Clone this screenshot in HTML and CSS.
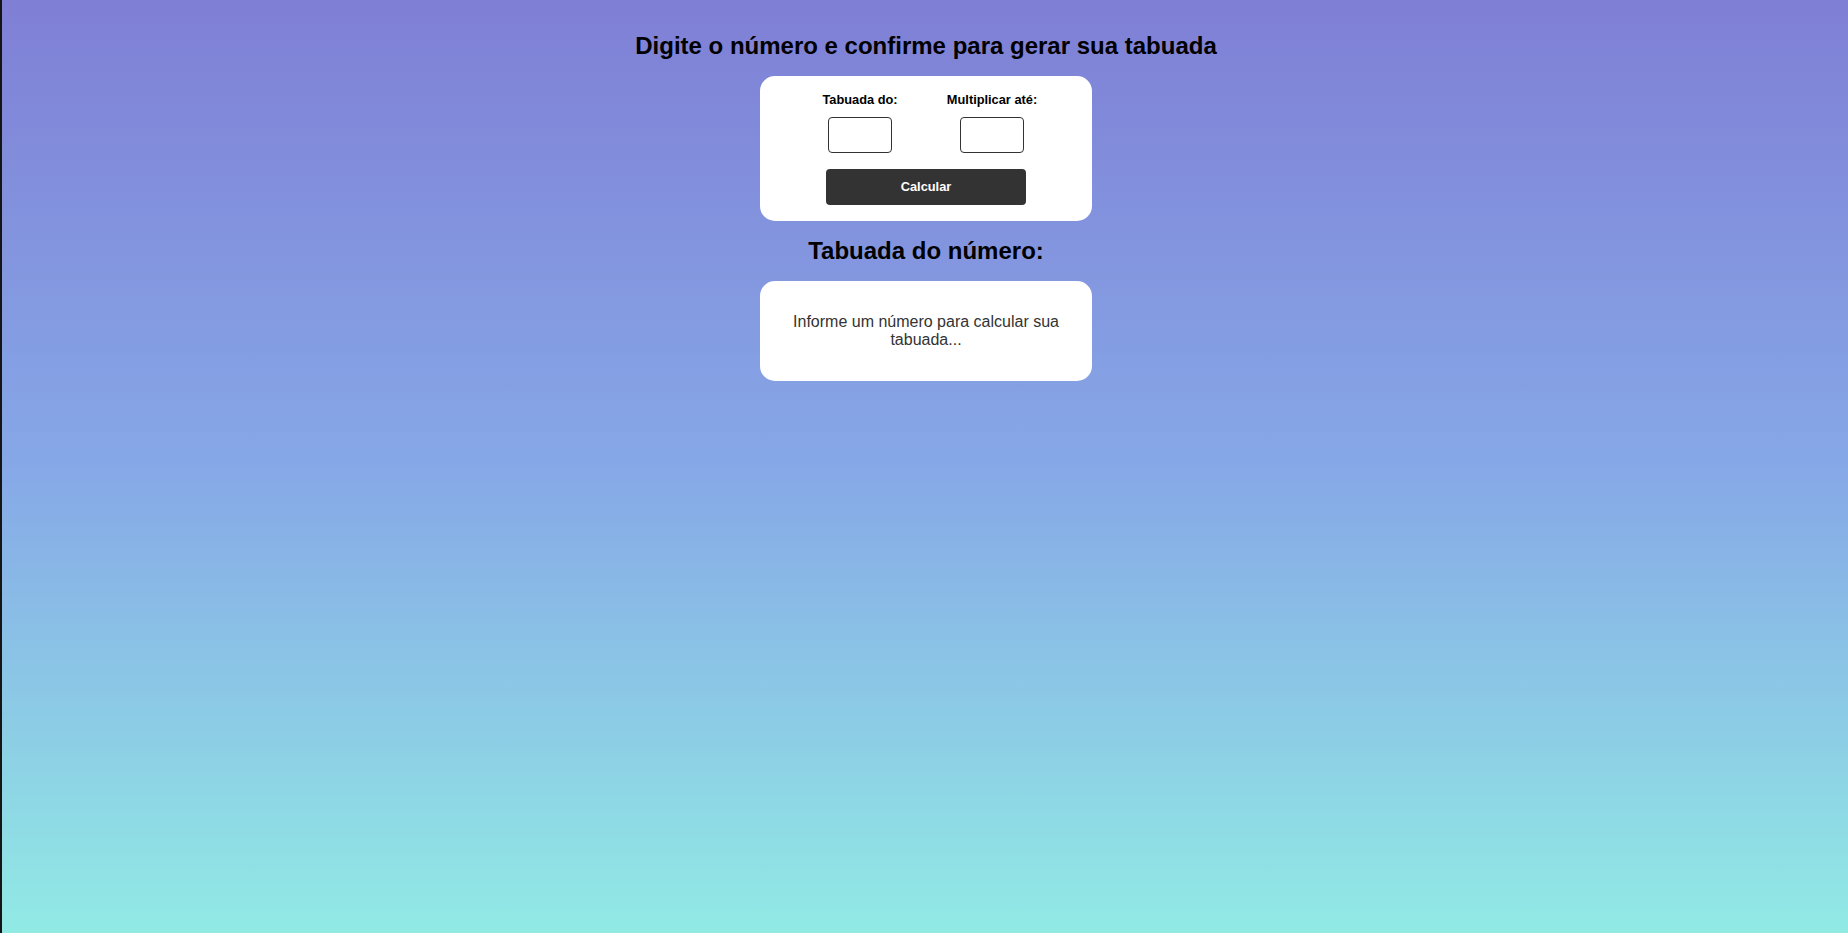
FILE: index.html
```html
<!DOCTYPE html>
<html lang="pt-BR">
<head>
<meta charset="UTF-8">
<title>Tabuada</title>
<link rel="stylesheet" href="styles.css">
</head>
<body>
<main class="page">
  <h2 class="title">Digite o número e confirme para gerar sua tabuada</h2>
  <section class="card form-card">
    <div class="fields">
      <div class="field">
        <label class="field-label" for="numero">Tabuada do:</label>
        <input class="field-input" id="numero" type="text">
      </div>
      <div class="field">
        <label class="field-label" for="ate">Multiplicar até:</label>
        <input class="field-input" id="ate" type="text">
      </div>
    </div>
    <button class="btn" type="button">Calcular</button>
  </section>
  <h2 class="title">Tabuada do número:</h2>
  <section class="card result-card">
    <p class="result-text">Informe um número para calcular sua tabuada...</p>
  </section>
</main>
</body>
</html>
```
FILE: styles.css
```css
html, body {
  margin: 0;
  padding: 0;
  height: 100%;
}
body {
  font-family: "Liberation Sans", Arial, sans-serif;
  background: linear-gradient(to bottom, #7f7fd5, #86a8e7, #91eae4);
  border-left: 2px solid #151515;
  box-sizing: border-box;
  min-height: 100vh;
}
.page {
  display: flex;
  flex-direction: column;
  align-items: center;
  padding-top: 32px;
  padding-left: 2px;
}
.title {
  margin: 0;
  font-size: 24px;
  font-weight: bold;
  color: #000;
  line-height: 27.6px;
}
.card {
  background: #fff;
  border-radius: 15px;
  width: 332px;
  box-sizing: border-box;
}
.form-card {
  margin: 16px 0 16px;
  padding: 16px 20px 16px;
  display: flex;
  flex-direction: column;
  align-items: center;
}
.fields {
  display: grid;
  grid-template-columns: 100px 100px;
  column-gap: 32px;
}
.field {
  display: flex;
  flex-direction: column;
  align-items: center;
}
.field-label {
  font-size: 12.8px;
  font-weight: bold;
  color: #000;
  line-height: 15px;
  white-space: nowrap;
}
.field-input {
  margin-top: 10px;
  width: 64px;
  height: 36px;
  box-sizing: border-box;
  border: 1px solid #333;
  border-radius: 4px;
  background: #fff;
  padding: 0 4px;
  font-family: inherit;
}
.btn {
  margin-top: 16px;
  width: 200px;
  height: 36px;
  border: none;
  border-radius: 4px;
  background: #333;
  color: #fff;
  font-family: inherit;
  font-size: 12.8px;
  font-weight: bold;
}
.result-card {
  margin-top: 17px;
  padding: 32px 20px 32px;
  text-align: center;
}
.result-text {
  margin: 0;
  font-size: 16px;
  line-height: normal;
  color: #333;
}
```
